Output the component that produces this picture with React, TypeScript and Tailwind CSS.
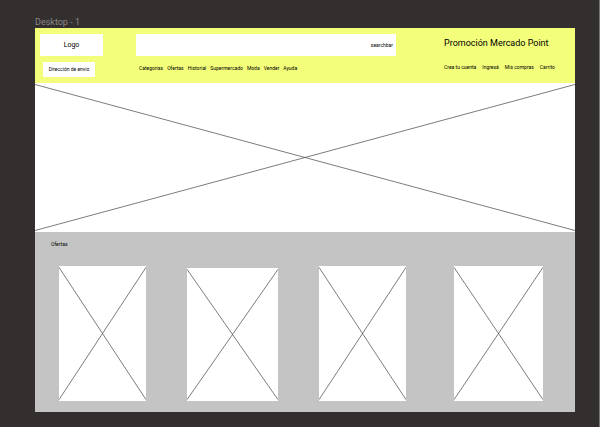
import React from "react";

const categories = ["Categorias", "Ofertas", "Historial", "Supermercado", "Moda", "Vender", "Ayuda"];
const account = ["Crea tu cuenta", "Ingresá", "Mis compras", "Carrito"];
const offers = [
  "flex-[87] h-[135px]",
  "flex-[91] h-[133px] ml-[41px]",
  "flex-[87] h-[135px] ml-[41px]",
  "flex-[89] h-[135px] ml-[48px]",
];

function Cross({ label }: { label: string }) {
  return (
    <svg role="img" aria-label={label} className="block h-full w-full" preserveAspectRatio="none" viewBox="0 0 100 100">
      <path d="M0 1 L100 99 M0 99 L100 1" stroke="#444" strokeWidth="0.7" vectorEffect="non-scaling-stroke" fill="none" />
    </svg>
  );
}

export default function App() {
  return (
    <div className="min-h-screen border-r border-[#777] bg-[#332f2f] pt-4 pr-6 pb-[15px] pl-[35px] font-['Roboto',sans-serif] text-black">
      <p className="h-3 text-[9px] leading-3 text-[#8a8787]">Desktop - 1</p>
      <main>
        <header className="flex h-[55px] bg-[#f3ff7a] pt-1.5 pl-[5px]">
          <div className="w-24 shrink-0">
            <a href="#inicio" className="flex h-[22px] w-[63px] items-center justify-center bg-white text-[7px]">
              Logo
            </a>
            <button type="button" className="mt-1.5 ml-[3px] flex h-[15px] w-[52px] items-center justify-center bg-white text-[5px] whitespace-nowrap">
              Dirección de envio
            </button>
          </div>
          <div className="flex-1">
            <input
              type="text"
              aria-label="Buscar"
              defaultValue="searchbar"
              className="block h-[22px] w-full bg-white pr-[3px] text-right text-[5px] outline-none"
            />
            <nav aria-label="Categorias" className="mt-1.5 ml-[3px] flex gap-1 text-[5px] leading-3 whitespace-nowrap">
              {categories.map((c) => (
                <a key={c} href="#categorias">{c}</a>
              ))}
            </nav>
          </div>
          <div className="ml-12 w-[131px] shrink-0">
            <h1 className="pt-[3px] text-[9px] leading-3 whitespace-nowrap">Promoción Mercado Point</h1>
            <nav aria-label="Cuenta" className="mt-3 flex gap-1.5 text-[5px] leading-3 whitespace-nowrap">
              {account.map((c) => (
                <a key={c} href="#cuenta">{c}</a>
              ))}
            </nav>
          </div>
        </header>
        <section className="h-[149px] bg-white">
          <Cross label="Banner" />
        </section>
        <section className="bg-[#c4c4c4] pt-1.5 pr-8 pb-[11px] pl-6">
          <h2 className="-ml-2 text-[5px] leading-3">Ofertas</h2>
          <div className="mt-4 flex items-end">
            {offers.map((size, i) => (
              <article key={i} className={`${size} bg-white`}>
                <Cross label={`Oferta ${i + 1}`} />
              </article>
            ))}
          </div>
        </section>
      </main>
    </div>
  );
}
